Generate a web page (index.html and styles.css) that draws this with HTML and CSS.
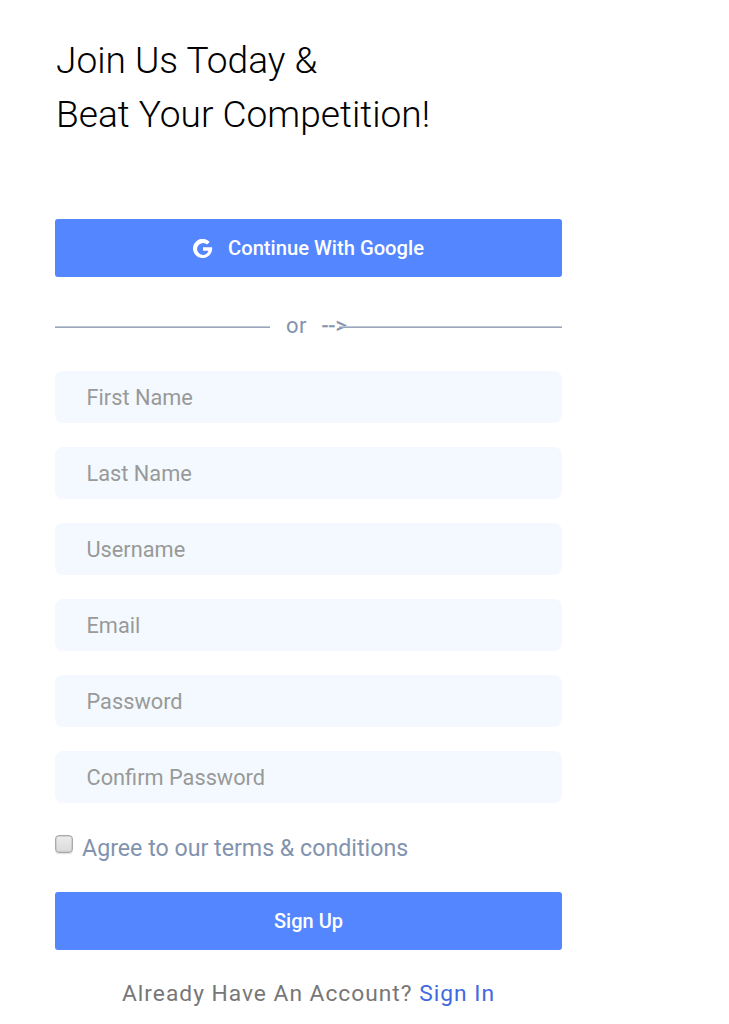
FILE: index.html
```html
<!DOCTYPE html>
<html lang="en">
<head>
<meta charset="utf-8">
<title>Sign Up</title>
<link rel="stylesheet" href="styles.css">
</head>
<body>
<main class="signup">
  <h1 class="title">Join Us Today &amp;<br>Beat Your Competition!</h1>
  <button class="btn btn-google" type="button">
    <svg class="google-icon" viewBox="0 0 20 20" aria-hidden="true"><path d="M19.1 8.2H10V11.7H15.4C14.7 14.3 12.7 16 10 16A6 6 0 1 1 14.1 5.5L16.7 3A9.6 9.6 0 1 0 19.1 8.2Z" fill="#fff"/></svg>
    <span>Continue With Google</span>
  </button>
  <div class="divider"><span class="line line-left"></span><span class="or">or</span><span class="arrow">--&gt;</span><span class="line line-right"></span></div>
  <form class="form">
    <input class="field" type="text" placeholder="First Name">
    <input class="field" type="text" placeholder="Last Name">
    <input class="field" type="text" placeholder="Username">
    <input class="field" type="text" placeholder="Email">
    <input class="field" type="text" placeholder="Password">
    <input class="field" type="text" placeholder="Confirm Password">
    <label class="terms"><input class="check" type="checkbox"><span>Agree to our terms &amp; conditions</span></label>
    <button class="btn" type="button">Sign Up</button>
  </form>
  <p class="signin">Already Have An Account? <a class="link" href="#">Sign In</a></p>
</main>
</body>
</html>
```
FILE: styles.css
```css
* { box-sizing: border-box; }
body { margin: 0; background: #fff; font-family: Roboto, "Liberation Sans", sans-serif; }
.signup { width: 507px; margin-left: 55px; padding-top: 34px; }
.title { margin: 0 0 77.4px; padding-left: 1px; font-size: 37.1px; line-height: 54px; font-weight: 300; color: #000; white-space: nowrap; }
.btn { display: flex; align-items: center; justify-content: center; width: 100%; height: 58px; padding: 1px 0 0; border: 0; border-radius: 3px; background: #5386ff; color: #fff; font: 500 20px Roboto, sans-serif; }
.btn-google { gap: 15px; padding-top: 0; font-size: 20.2px; }
.google-icon { width: 20px; height: 20px; margin-top: 2px; }
.divider { display: flex; align-items: center; height: 30px; margin: 33.6px 0 30px; color: #8193ae; font-size: 22px; letter-spacing: .5px; }
.line { height: 2px; margin-top: 3px; background: linear-gradient(#c0c8d5 50%, #98a5ba 50%); }
.line-left { width: 215px; margin-right: 16px; }
.line-right { flex: 1; margin-left: -9px; }
.or { margin-right: 15px; }
.arrow { letter-spacing: .7px; -webkit-text-stroke: .3px #8193ae; }
.form { display: flex; flex-direction: column; }
.field { height: 52px; margin: 0 0 24px; padding: 2px 31px 0 31.5px; border: 0; border-radius: 8px; background: #f3f9fe; font: 400 21.75px Roboto, sans-serif; }
.field::placeholder { color: #999; opacity: 1; }
.terms { display: flex; height: 30px; margin: 6px 0 29px; gap: 9px; color: #8193ae; font-size: 23.2px; line-height: 30px; }
.check { appearance: none; width: 18px; height: 18px; margin: 2px 0 0; border: 1px solid #aaa; border-radius: 4px; background: linear-gradient(#ececec, #dadada); box-shadow: 0 1px 1px #ddd, inset 0 0 0 .5px #bbb; }
.signin { margin: 29px 0 0; text-align: center; font-size: 22.75px; line-height: 30px; letter-spacing: 1px; color: #777; white-space: nowrap; }
.link { color: #4169e1; text-decoration: none; }
```
